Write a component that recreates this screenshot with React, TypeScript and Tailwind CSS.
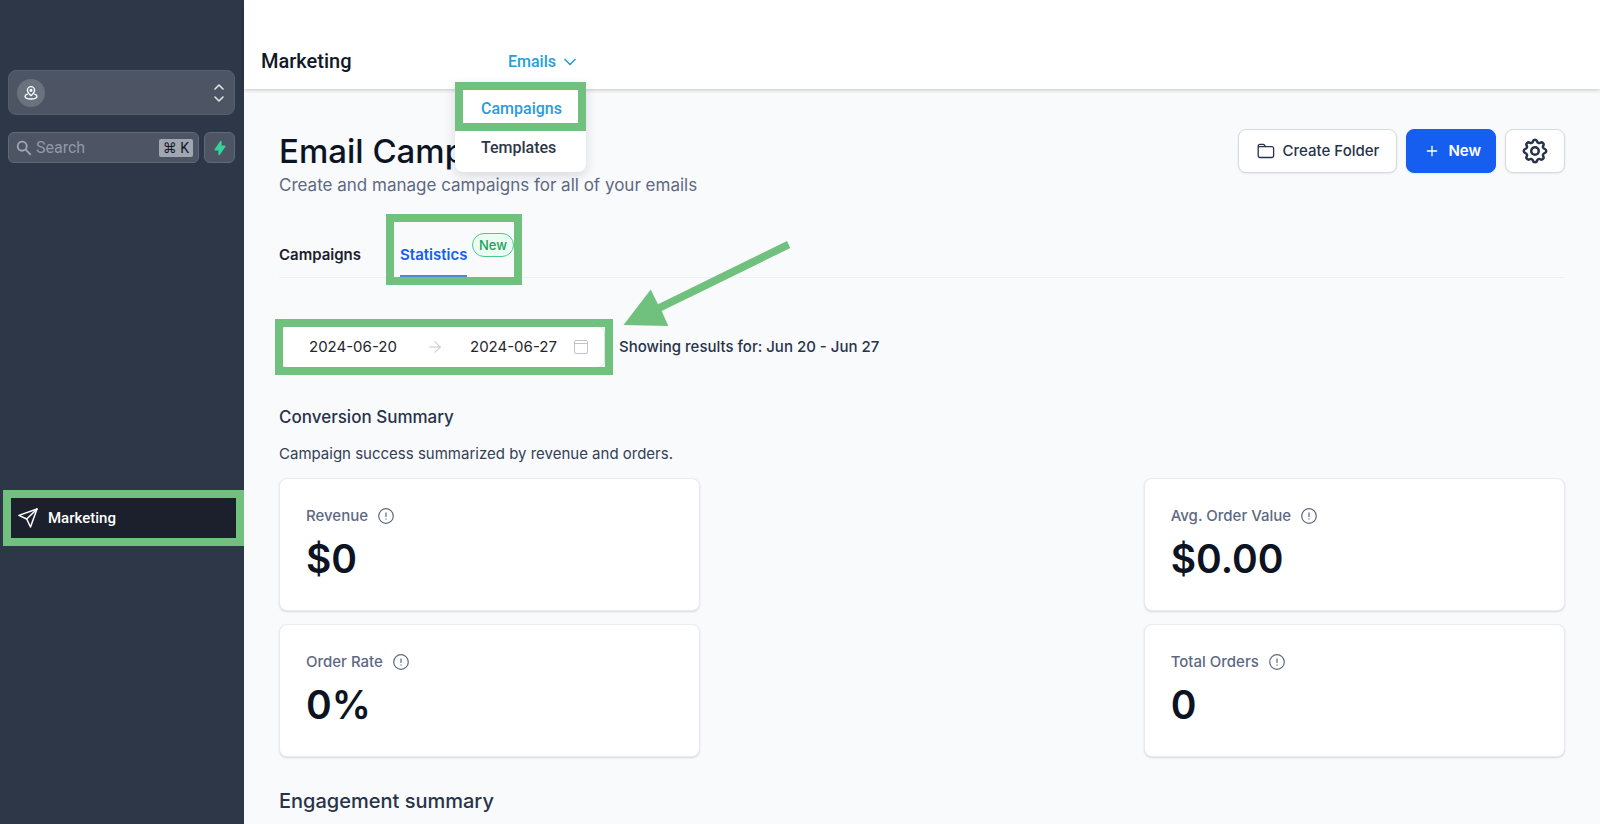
import type { ReactNode } from "react";
import { ArrowRight, ChevronDown, Plus } from "lucide-react";
import { HiLightningBolt, HiOutlineCog, HiSearch } from "react-icons/hi";

interface StatCardProps {
  label: string;
  value: string;
  className?: string;
}

function AlertIcon() {
  return (
    <svg viewBox="0 0 16 16" className="h-4 w-4 shrink-0" fill="none" stroke="currentColor" strokeWidth="1.2" strokeLinecap="round">
      <circle cx="8" cy="8" r="7.3" />
      <path d="M8 4.8v3.6M8 10.9v.2" />
    </svg>
  );
}

function PinIcon() {
  return (
    <svg viewBox="0 0 24 24" className="h-4 w-4" fill="none" stroke="currentColor" strokeWidth="2" strokeLinecap="round" strokeLinejoin="round">
      <path d="M12 16c3-2.6 5.4-5.1 5.4-8.1a5.4 5.4 0 0 0-10.8 0c0 3 2.4 5.5 5.4 8.1z" />
      <circle cx="12" cy="8" r="1.4" />
      <path d="M6.5 13.6C4.3 14.3 3 15.5 3 16.9 3 19.2 7 21 12 21s9-1.8 9-4.1c0-1.4-1.3-2.6-3.5-3.3" />
    </svg>
  );
}

function SelectorIcon() {
  return (
    <svg viewBox="0 0 24 24" className="h-6 w-6" fill="none" stroke="currentColor" strokeWidth="1.6" strokeLinecap="round" strokeLinejoin="round">
      <path d="M8 8l4-4 4 4m0 8l-4 4-4-4" />
    </svg>
  );
}

function PlaneIcon() {
  return (
    <svg viewBox="0 0 20 20" className="h-5 w-5" fill="none" stroke="currentColor" strokeWidth="1.5" strokeLinejoin="round" strokeLinecap="round">
      <path d="M.9 7.4L19 1l-6.5 18-3.8-8z" />
      <path d="M8.7 11L19 1l-5.800 5.800" />
    </svg>
  );
}

function FolderIcon() {
  return (
    <svg viewBox="0 0 18 16" className="h-4 w-[18px]" fill="none" stroke="currentColor" strokeWidth="1.3" strokeLinejoin="round">
      <path d="M1.2 12.7V3A1.6 1.6 0 0 1 2.8 1.4h3.4a1.6 1.6 0 0 1 1.3.7l1 1.5h6.3a1.8 1.8 0 0 1 1.800 1.8v7.3a1.8 1.8 0 0 1-1.8 1.8H3a1.8 1.8 0 0 1-1.8-1.8z" />
      <path d="M1.2 3.6h7.3" />
    </svg>
  );
}

function CalendarIcon() {
  return (
    <svg viewBox="0 0 16 16" className="h-4 w-4 shrink-0" fill="none" stroke="currentColor" strokeWidth="1">
      <rect x="1.5" y="1.5" width="13" height="13" rx="1.5" />
      <path d="M1.5 4.5h13" />
    </svg>
  );
}

// Green frame drawn over an element to call it out
function Highlight({ className }: { className: string }) {
  return <div aria-hidden="true" className={`pointer-events-none absolute border-8 border-[#70c17d] ${className}`} />;
}

function StatCard({ label, value, className = "" }: StatCardProps) {
  return (
    <div
      className={`rounded-lg border border-[#e9ebef] bg-white px-[26px] pt-[25px] pb-[27px] shadow-[0_1px_2px_rgba(16,24,40,0.14)] ${className}`}
    >
      <div className="flex items-center gap-2.5 text-[#5d6982]">
        <h3 className="text-[15px] leading-6 font-medium">{label}</h3>
        <AlertIcon />
      </div>
      <p className="mt-[7px] text-[39px] leading-12 font-semibold text-[#0c1424]">{value}</p>
    </div>
  );
}

function ToolbarButton({ children, className }: { children: ReactNode; className: string }) {
  return (
    <button
      type="button"
      className={`flex h-11 items-center rounded-lg border text-[15px] shadow-[0_1px_2px_rgba(16,24,40,0.08)] ${className}`}
    >
      {children}
    </button>
  );
}

function Sidebar() {
  return (
    <aside className="w-[244px] shrink-0 bg-[#2e3748] pt-[70px] font-[Roboto,sans-serif]">
      <div className="px-2">
        <button
          type="button"
          aria-label="Switch account"
          className="flex h-[45px] w-full max-w-[227px] items-center justify-between rounded-lg border border-[#565f6e] bg-[#4d5564] pr-[3px] pl-2 text-[#e2e5ea]"
        >
          <span className="flex h-7 w-7 items-center justify-center rounded-full bg-[#6a7280] text-white">
            <PinIcon />
          </span>
          <SelectorIcon />
        </button>
        <div className="mt-[17px] flex max-w-[227px] gap-[5px]">
          <label className="flex h-[31px] min-w-0 flex-1 items-center rounded-md border border-[#606978] bg-[#4d5564] pr-[5px] pl-1.5">
            <HiSearch className="h-[18px] w-[18px] shrink-0 text-[#a0a7b4]" />
            <input
              type="search"
              aria-label="Search"
              placeholder="Search"
              className="ml-[3px] w-full min-w-0 bg-transparent text-base text-white outline-none placeholder:text-[#9299a7]"
            />
            <kbd className="shrink-0 rounded-xs bg-[#a1a6b3] px-1 font-[Roboto,'DejaVu_Sans',sans-serif] text-sm leading-[18px] text-[#111827]">
              ⌘ K
            </kbd>
          </label>
          <button
            type="button"
            aria-label="Quick actions"
            className="flex h-[31px] w-[31px] shrink-0 items-center justify-center rounded-md border border-[#606978] bg-[#4d5564] text-[#34d399]"
          >
            <HiLightningBolt className="h-4 w-4" />
          </button>
        </div>
      </div>
      <nav className="relative mt-[335px] pl-1">
        <a href="#marketing" className="flex h-10 items-center gap-2.5 bg-[#1b202c] pl-3.5 text-[15px] font-medium text-white">
          <PlaneIcon />
          Marketing
        </a>
        <Highlight className="-inset-y-2 right-0 left-[3px]" />
      </nav>
    </aside>
  );
}

function TopBar() {
  return (
    <header className="relative z-10 flex h-[89px] items-start bg-white pt-12 pl-[17px] font-[Roboto,sans-serif] shadow-[0_1px_4px_rgba(16,24,40,0.24)]">
      <p className="w-[247px] text-xl leading-[26px] font-medium text-[#111827]">Marketing</p>
      <div className="relative">
        <button type="button" className="flex items-center gap-1 text-base leading-7 font-medium text-[#2b9cdb]">
          Emails
          <ChevronDown className="h-5 w-5" strokeWidth={2} />
        </button>
        <ul className="absolute top-[34px] -left-[53px] w-[131px] rounded-b-lg bg-white pt-3.5 pb-2.5 text-base font-medium shadow-[0_4px_12px_rgba(16,24,40,0.14)]">
          <li>
            <a href="#campaigns" className="block pl-[26px] leading-[26px] text-[#2b9cdb]">
              Campaigns
            </a>
          </li>
          <li>
            <a href="#templates" className="mt-3 block pl-[26px] leading-7 text-[#2d3748]">
              Templates
            </a>
          </li>
          <Highlight className="inset-x-0 top-0 h-[49px]" />
        </ul>
      </div>
    </header>
  );
}

function DateRange() {
  return (
    <div className="mt-12 flex items-center gap-3.5">
      <div className="relative flex h-[42px] w-[326px] items-center rounded-lg border border-[#e0e3e9] bg-white pr-4 pl-[29px] text-[#bfc3ca]">
        <input
          type="text"
          aria-label="Start date"
          defaultValue="2024-06-20"
          className="w-[117px] text-[15px] text-[#24262b] outline-none"
        />
        <ArrowRight className="h-[18px] w-[18px] shrink-0" strokeWidth={1.4} />
        <input
          type="text"
          aria-label="End date"
          defaultValue="2024-06-27"
          className="ml-[26px] w-[103px] text-[15px] text-[#24262b] outline-none"
        />
        <CalendarIcon />
        <Highlight className="-inset-y-2 -right-[9px] -left-[5px]" />
        <svg viewBox="0 0 168 86" className="pointer-events-none absolute -top-[86px] left-[343px] h-[86px] w-[168px] fill-[#70c17d]" aria-hidden="true">
          <path d="M164 0l3.300 7-128.600 63 6.600 15L.5 84l27.2-35.5 7.300 14.700z" />
        </svg>
      </div>
      <p className="text-[15px] font-medium text-[#27334a]">Showing results for: Jun 20 - Jun 27</p>
    </div>
  );
}

export default function App() {
  return (
    <div className="flex min-h-screen bg-[#f9fafc] font-[Inter,sans-serif]">
      <Sidebar />
      <div className="min-w-0 flex-1">
        <TopBar />
        <main className="px-[35px] pt-10">
          <div className="flex items-start justify-between">
            <div>
              <h1 className="text-[33px] leading-[44px] font-medium text-[#0c1424]">Email Campaigns</h1>
              <p className="text-[17px] leading-6 text-[#5d6982]">Create and manage campaigns for all of your emails</p>
            </div>
            <div className="flex gap-[9px]">
              <ToolbarButton className="gap-2 border-[#d5d9e0] bg-white pr-[17px] pl-[18px] font-medium text-[#27334a]">
                <FolderIcon />
                Create Folder
              </ToolbarButton>
              <ToolbarButton className="gap-2 border-[#155eef] bg-[#155eef] pr-3.5 pl-[17px] font-semibold text-white">
                <Plus className="h-4 w-4" strokeWidth={2} />
                New
              </ToolbarButton>
              <ToolbarButton className="border-[#d5d9e0] bg-white px-3.5 text-[#27334a]">
                <HiOutlineCog className="h-[30px] w-[30px]" aria-label="Settings" />
              </ToolbarButton>
            </div>
          </div>

          <nav className="mt-[46px] flex items-end gap-[39px] border-b border-[#eff0f3] text-[15px] font-semibold">
            <a href="#campaigns" className="pb-2.5 leading-6 text-[#1a202c]">
              Campaigns
            </a>
            <div className="relative">
              <a href="#statistics" className="block border-b-2 border-[#4a86e8] pb-2 leading-6 text-[#155eef]">
                Statistics
              </a>
              <span className="absolute -top-2.5 left-[72px] rounded-full border border-[#47cd89] bg-[#edfcf2] px-1.5 text-[13px] leading-[22px] font-medium text-[#16a35a]">
                New
              </span>
              <Highlight className="-top-[29px] -left-[14px] h-[71px] w-[136px]" />
            </div>
          </nav>

          <DateRange />

          <h2 className="mt-9 text-[17px] leading-[26px] font-medium text-[#27334a]">Conversion Summary</h2>
          <p className="mt-3 text-[15px] leading-6 text-[#344055]">Campaign success summarized by revenue and orders.</p>

          <div className="mt-3 grid grid-cols-3 gap-x-[11px] gap-y-[13px]">
            <StatCard label="Revenue" value="$0" />
            <StatCard label="Avg. Order Value" value="$0.00" className="col-start-3" />
            <StatCard label="Order Rate" value="0%" />
            <StatCard label="Total Orders" value="0" className="col-start-3" />
          </div>

          <h2 className="mt-[30px] text-xl leading-7 font-medium text-[#27334a]">Engagement summary</h2>
        </main>
      </div>
    </div>
  );
}
